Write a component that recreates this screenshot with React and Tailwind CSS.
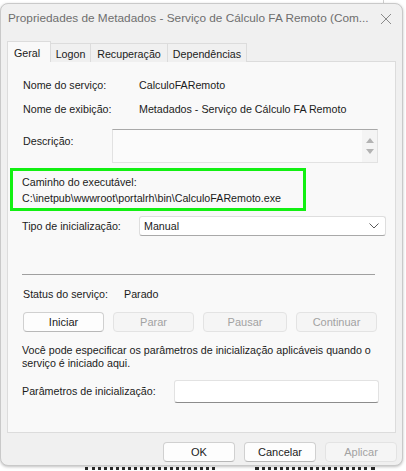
import React from "react";

const font = "font-['Liberation_Sans',Arial,sans-serif]";

const Btn = ({ children, w = "w-[81px]", disabled, className = "" }) => (
  <div
    className={`${w} h-[20px] flex items-center justify-center rounded-[4px] border text-[11px] ${
      disabled
        ? "bg-[#f5f5f5] border-[#e3e3e3] text-[#a2a2a2]"
        : "bg-[#fdfdfd] border-[#d0d0d0] border-b-[#b8b8b8] text-[#1b1b1b]"
    } ${className}`}
  >
    {children}
  </div>
);

export default function App() {
  return (
    <div className={`w-[406px] h-[471px] bg-white relative overflow-hidden ${font}`}>
      {/* bits of the window behind */}
      <div className="absolute left-[383px] top-0 w-px h-[8px] bg-[#cfcfcf]" />
      <div className="absolute left-[85px] top-[467px] w-[130px] h-[4px] border-t-[3px] border-dotted border-[#2a2a2a]" />
      <div className="absolute left-[255px] top-[467px] w-[120px] h-[4px] border-t-[3px] border-dotted border-[#2a2a2a]" />

      <div className="relative mt-[3px] w-[403px] h-[463px] bg-[#f0f0f0] border border-[#c9c9c9] rounded-[8px] shadow-[0_1px_3px_rgba(0,0,0,0.25)] flex flex-col">
        {/* title bar */}
        <div className="h-[29px] flex items-center justify-between pl-[7px] pr-[10px]">
          <span className="text-[11.8px] text-[#6e6e6e] whitespace-nowrap">
            Propriedades de Metadados - Serviço de Cálculo FA Remoto (Com...
          </span>
          <svg width="12" height="12" viewBox="0 0 12 12" className="shrink-0">
            <path d="M1 1 L11 11 M11 1 L1 11" stroke="#8a8a8a" strokeWidth="1" fill="none" />
          </svg>
        </div>

        {/* tabs */}
        <div className="flex items-end ml-[6px] mt-[8px] h-[21px] text-[10.7px] text-[#1b1b1b] relative z-10">
          <div className="w-[44px] h-[21px] bg-[#f9f9f9] border border-[#dcdcdc] border-b-0 pl-[6px] pt-[3px]">
            Geral
          </div>
          <div className="w-[40px] h-[19px] bg-[#f0f0f0] border border-[#dcdcdc] border-l-0 border-b-0 flex items-center justify-center pt-[2px]">
            Logon
          </div>
          <div className="w-[77px] h-[19px] bg-[#f0f0f0] border border-[#dcdcdc] border-l-0 border-b-0 flex items-center justify-center pt-[2px]">
            Recuperação
          </div>
          <div className="w-[79px] h-[19px] bg-[#f0f0f0] border border-[#dcdcdc] border-l-0 border-b-0 flex items-center justify-center pt-[2px]">
            Dependências
          </div>
        </div>

        {/* tab panel */}
        <div className="ml-[6px] -mt-px w-[389px] h-[372px] bg-[#f9f9f9] border border-[#dcdcdc] text-[10.7px] text-[#1b1b1b] flex flex-col">
          <div className="flex h-[16px] items-center mt-[15px] pl-[15px]">
            <span className="w-[116px]">Nome do serviço:</span>
            <span>CalculoFARemoto</span>
          </div>
          <div className="flex h-[16px] items-center mt-[8px] pl-[15px]">
            <span className="w-[116px]">Nome de exibição:</span>
            <span>Metadados - Serviço de Cálculo FA Remoto</span>
          </div>

          <div className="flex items-start mt-[12px] pl-[15px]">
            <span className="w-[89px] mt-[4px]">Descrição:</span>
            <div className="w-[266px] h-[34px] bg-[#fbfbfb] border border-[#e2e2e2] border-t-[#a9a9a9] flex justify-end">
              <div className="w-[15px] h-full bg-[#f4f4f4] flex flex-col items-center justify-center gap-[6px]">
                <svg width="8" height="5" viewBox="0 0 8 5">
                  <path d="M0 5 L4 0 L8 5 Z" fill="#b3b3b3" />
                </svg>
                <svg width="8" height="5" viewBox="0 0 8 5">
                  <path d="M0 0 L8 0 L4 5 Z" fill="#b3b3b3" />
                </svg>
              </div>
            </div>
          </div>

          <div className="ml-[2px] mt-[5px] w-[296px] h-[43px] border-[3px] border-[#12f012] pl-[9px] pt-[3px]">
            <div className="h-[16px] flex items-center">Caminho do executável:</div>
            <div className="h-[16px] flex items-center">
              C:\inetpub\wwwroot\portalrh\bin\CalculoFARemoto.exe
            </div>
          </div>

          <div className="flex items-center mt-[5px] pl-[14px]">
            <span className="w-[117px]">Tipo de inicialização:</span>
            <div className="w-[247px] h-[20px] bg-white border border-[#dedede] border-b-[#a9a9a9] rounded-[3px] flex items-center justify-between pl-[4px] pr-[6px]">
              <span>Manual</span>
              <svg width="10" height="6" viewBox="0 0 10 6">
                <path d="M0.5 0.5 L5 5 L9.5 0.5" stroke="#5a5a5a" strokeWidth="1" fill="none" />
              </svg>
            </div>
          </div>

          <div className="ml-[14px] mt-[38px] w-[353px] h-px bg-[#a0a0a0]" />

          <div className="flex h-[16px] items-center mt-[11px] pl-[15px]">
            <span className="w-[101px]">Status do serviço:</span>
            <span>Parado</span>
          </div>

          <div className="flex mt-[10px] pl-[15px] gap-[9px]">
            <Btn>Iniciar</Btn>
            <Btn disabled>Parar</Btn>
            <Btn disabled w="w-[84px]">Pausar</Btn>
            <Btn disabled>Continuar</Btn>
          </div>

          <p className="mt-[12px] pl-[14px] pr-[10px] leading-[13px]">
            Você pode especificar os parâmetros de inicialização aplicáveis quando o serviço é iniciado aqui.
          </p>

          <div className="flex items-center mt-[10px] pl-[14px]">
            <span className="w-[152px]">Parâmetros de inicialização:</span>
            <div className="w-[205px] h-[23px] bg-white border border-[#e2e2e2] border-b-[#8c8c8c] rounded-[3px]" />
          </div>
        </div>

        {/* dialog buttons */}
        <div className="flex justify-end gap-[9px] mt-[9px] pr-[5px]">
          <Btn w="w-[72px]">OK</Btn>
          <Btn w="w-[72px]">Cancelar</Btn>
          <Btn w="w-[72px]" disabled>Aplicar</Btn>
        </div>
      </div>
    </div>
  );
}
